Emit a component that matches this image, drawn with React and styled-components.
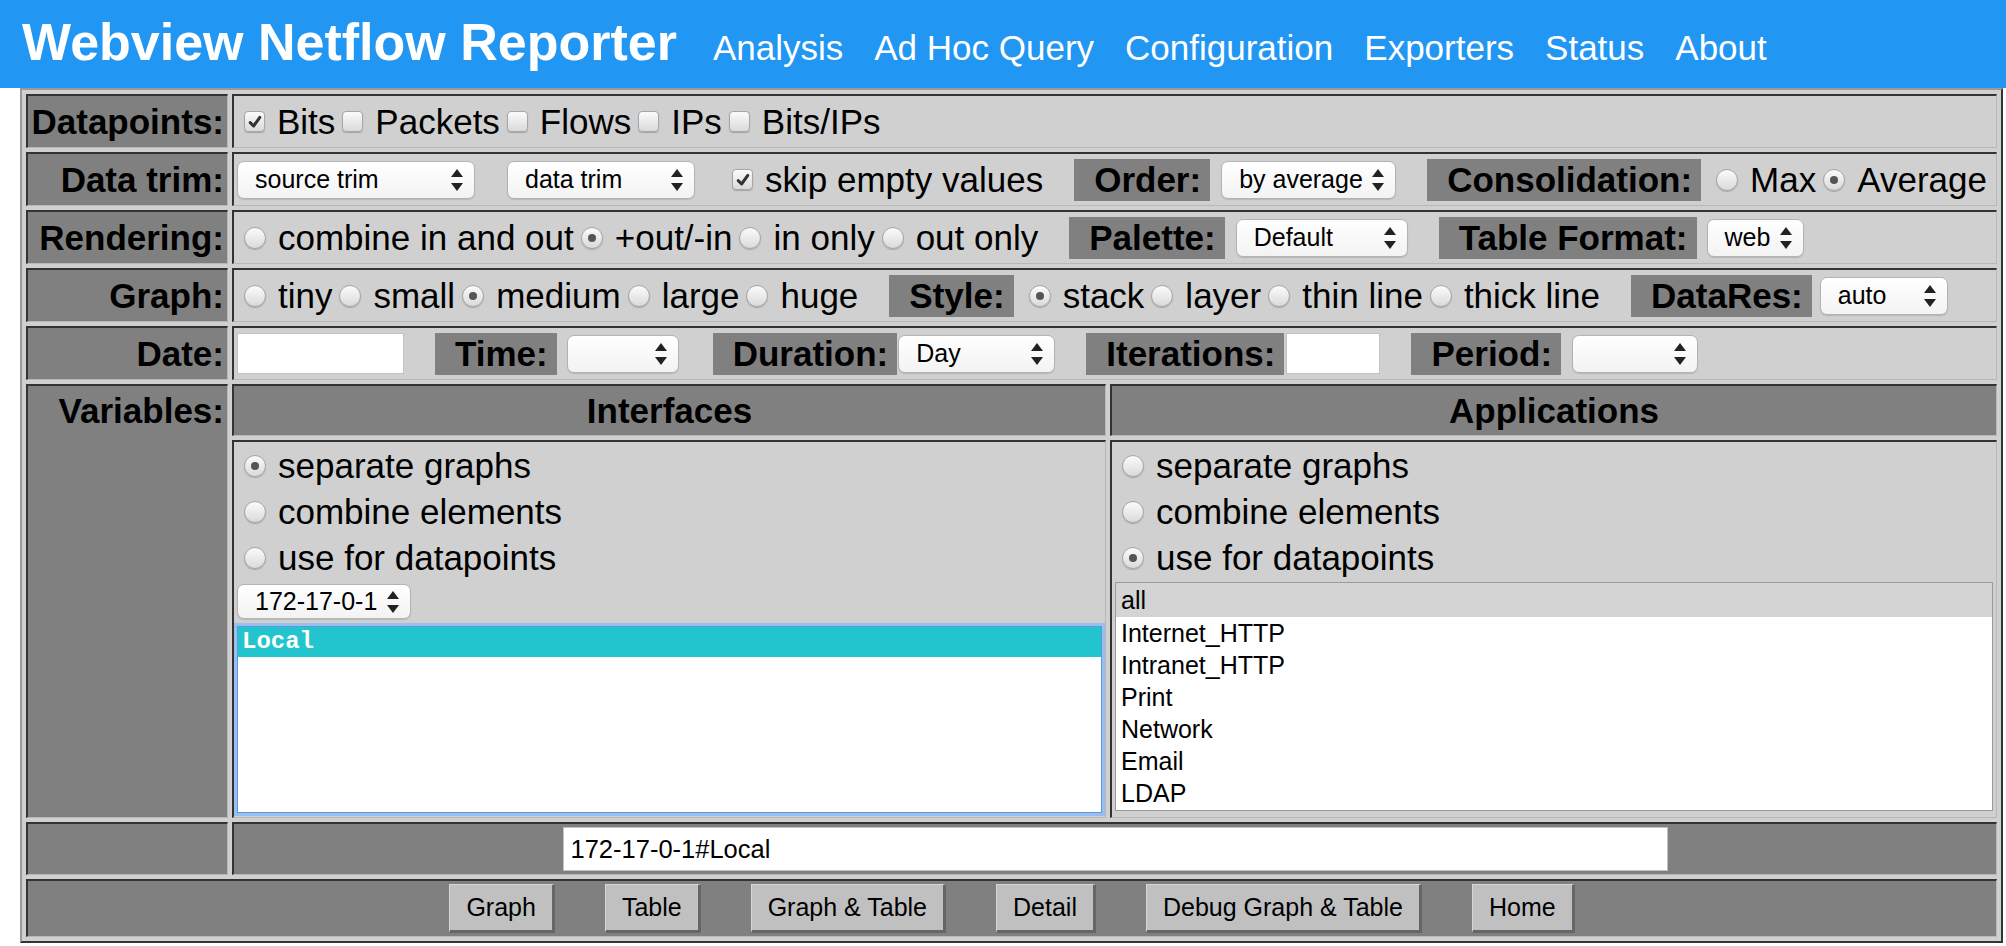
import React from 'react'
import styled, { createGlobalStyle } from 'styled-components'

const GlobalStyle = createGlobalStyle`
  body {
    margin: 0;
    background: #fff;
    color: #000;
    font-family: "Liberation Sans", Arial, Helvetica, sans-serif;
  }
`

const Header = styled.header`
  display: flex;
  align-items: baseline;
  gap: 31px;
  height: 88px;
  box-sizing: border-box;
  padding: 16px 0 0 22px;
  background: #2196f3;
  color: #fff;
`

const Title = styled.h1`
  margin: 0 5px 0 0;
  font-size: 52px;
  font-weight: bold;
  line-height: 1;
  white-space: nowrap;
`

const NavLink = styled.a`
  font-size: 35px;
  line-height: 1;
  color: #fff;
  text-decoration: none;
  white-space: nowrap;
`

const Table = styled.div`
  display: grid;
  grid-template-columns: 202px 874px 887px;
  grid-template-rows: 54px 54px 54px 54px 54px 52px 378px 53px 58px;
  gap: 4px;
  padding: 4px;
  width: max-content;
  margin-left: 20px;
  border: 2px solid;
  border-color: #9a9a9a #333 #333 #9a9a9a;
  background: #d0d0d0;
`

const Cell = styled.div`
  box-sizing: border-box;
  border-style: solid;
  border-width: 2px 1px 1px 2px;
  border-color: #333 #b8b8b8 #b8b8b8 #333;
  min-width: 0;
`

const Label = styled(Cell)`
  grid-row: ${p => (p.$rows ? `span ${p.$rows}` : 'auto')};
  display: flex;
  justify-content: flex-end;
  align-items: ${p => (p.$top ? 'flex-start' : 'center')};
  padding: 0 3px;
  background: #808080;
  font-size: 35px;
  font-weight: bold;
  line-height: 50px;
  white-space: nowrap;
`

const Content = styled(Cell)`
  grid-column: span ${p => p.$span || 2};
  display: flex;
  align-items: center;
  justify-content: ${p => (p.$center ? 'center' : 'flex-start')};
  gap: ${p => p.$gap || 0}px;
  padding: 0 3px;
  background: ${p => (p.$dark ? '#808080' : '#d0d0d0')};
  font-size: 35px;
  white-space: nowrap;
`

const HeadCell = styled(Cell)`
  display: flex;
  align-items: center;
  justify-content: center;
  background: #808080;
  font-size: 35px;
  font-weight: bold;
`

const Panel = styled(Cell)`
  display: flex;
  flex-direction: column;
  padding: 1px 3px 0;
  background: #d0d0d0;
  font-size: 35px;
  white-space: nowrap;
`

const Opt = styled.label`
  display: inline-flex;
  align-items: center;
  flex-shrink: 0;
  height: ${p => (p.$line ? '46px' : 'auto')};
  margin-left: ${p => p.$ml || 0}px;
`

const RadioDot = styled.span`
  display: inline-flex;
  align-items: center;
  justify-content: center;
  flex-shrink: 0;
  width: 22px;
  height: 22px;
  box-sizing: border-box;
  margin: 0 12px 0 7px;
  border: 1px solid #a6a6a6;
  border-radius: 50%;
  background: linear-gradient(#fbfbfb, #dadada);
  box-shadow: 0 1px 1px rgba(0, 0, 0, 0.2);

  &::after {
    content: '';
    display: ${p => (p.$on ? 'block' : 'none')};
    width: 8px;
    height: 8px;
    border-radius: 50%;
    background: #555;
  }
`

const CheckBox = styled.span`
  display: inline-flex;
  align-items: center;
  justify-content: center;
  flex-shrink: 0;
  width: 21px;
  height: 21px;
  box-sizing: border-box;
  margin: 0 12px 0 7px;
  border: 1px solid #a6a6a6;
  border-radius: 4px;
  background: linear-gradient(#fbfbfb, #dadada);
  box-shadow: 0 1px 1px rgba(0, 0, 0, 0.2);
`

const Tag = styled.span`
  display: inline-flex;
  align-items: center;
  flex-shrink: 0;
  height: 42px;
  box-sizing: border-box;
  padding: 0 9px 0 20px;
  margin-left: ${p => p.$ml ?? 31}px;
  margin-right: ${p => p.$mr ?? 11}px;
  background: #808080;
  font-size: 35px;
  font-weight: bold;
`

const SelectBox = styled.div`
  display: inline-flex;
  align-items: center;
  justify-content: space-between;
  flex-shrink: 0;
  align-self: ${p => (p.$start ? 'flex-start' : 'auto')};
  box-sizing: border-box;
  width: ${p => p.$w}px;
  height: ${p => p.$h || 38}px;
  padding: 0 11px 0 17px;
  margin-left: ${p => p.$ml || 0}px;
  margin-top: ${p => p.$mt || 0}px;
  border: 1px solid #b3b3b3;
  border-radius: 7px;
  background: linear-gradient(#ffffff, #f3f3f3);
  box-shadow: 0 1px 1px rgba(0, 0, 0, 0.12);
  font-size: 25px;
`

const TextField = styled.input`
  flex-shrink: 0;
  box-sizing: border-box;
  width: ${p => p.$w}px;
  height: ${p => p.$h || 41}px;
  padding: 0 7px;
  border: 1px solid #c2c2c2;
  background: #fff;
  font-family: inherit;
  font-size: 25.5px;
  color: #000;
  outline: none;
`

const ListBox = styled.div`
  box-sizing: border-box;
  height: ${p => p.$h}px;
  margin-top: ${p => p.$mt || 0}px;
  border: 1px solid ${p => (p.$focus ? '#5f97dd' : '#9a9a9a')};
  box-shadow: ${p => (p.$focus ? '0 0 0 3px #98c0ef' : 'none')};
  background: #fff;
  overflow: hidden;
`

const Option = styled.div`
  height: ${p => p.$h || 32}px;
  line-height: ${p => p.$h || 32}px;
  padding-left: 5px;
  background: ${p => (p.$sel ? '#d4d4d4' : 'transparent')};
  font-size: 25px;
`

const MonoOption = styled.div`
  height: 30px;
  line-height: 30px;
  padding-left: 4px;
  background: #22c5cd;
  color: #fff;
  font-family: "Liberation Mono", "Courier New", monospace;
  font-size: 24px;
  font-weight: bold;
`

const Button = styled.button`
  height: 49px;
  padding: 0 16px;
  border-style: solid;
  border-width: 1px 3px 3px 1px;
  border-color: #d6d6d6 #666 #666 #d6d6d6;
  background: #c0c0c0;
  color: #000;
  font-family: inherit;
  font-size: 25px;
  cursor: pointer;
`

const Arrows = () => (
  <svg width="12" height="22" viewBox="0 0 12 22">
    <polygon points="6,0 12,8 0,8" fill="#222" />
    <polygon points="0,14 12,14 6,22" fill="#222" />
  </svg>
)

const CheckMark = () => (
  <svg width="14" height="14" viewBox="0 0 14 14">
    <path d="M2.2 7.6 L5.6 11 L11.8 2.4" fill="none" stroke="#333" strokeWidth="3" strokeLinecap="round" strokeLinejoin="round" />
  </svg>
)

const Select = ({ value, ...rest }) => (
  <SelectBox {...rest}>
    <span>{value}</span>
    <Arrows />
  </SelectBox>
)

const Choice = ({ check, on, ml, line, children }) => (
  <Opt $ml={ml} $line={line}>
    {check ? <CheckBox>{on && <CheckMark />}</CheckBox> : <RadioDot $on={on} />}
    {children}
  </Opt>
)

const apps = ['Internet_HTTP', 'Intranet_HTTP', 'Print', 'Network', 'Email', 'LDAP']
const buttons = ['Graph', 'Table', 'Graph & Table', 'Detail', 'Debug Graph & Table', 'Home']

export default function App() {
  return (
    <>
      <GlobalStyle />
      <Header>
        <Title>Webview Netflow Reporter</Title>
        <NavLink href="#">Analysis</NavLink>
        <NavLink href="#">Ad Hoc Query</NavLink>
        <NavLink href="#">Configuration</NavLink>
        <NavLink href="#">Exporters</NavLink>
        <NavLink href="#">Status</NavLink>
        <NavLink href="#">About</NavLink>
      </Header>

      <Table>
        <Label>Datapoints:</Label>
        <Content>
          <Choice check on>Bits</Choice>
          <Choice check>Packets</Choice>
          <Choice check>Flows</Choice>
          <Choice check>IPs</Choice>
          <Choice check>Bits/IPs</Choice>
        </Content>

        <Label>Data trim:</Label>
        <Content>
          <Select $w={238} value="source trim" />
          <Select $w={188} $ml={32} value="data trim" />
          <Choice check on ml={30}>skip empty values</Choice>
          <Tag>Order:</Tag>
          <Select $w={175} value="by average" />
          <Tag $mr={8}>Consolidation:</Tag>
          <Choice>Max</Choice>
          <Choice on>Average</Choice>
        </Content>

        <Label>Rendering:</Label>
        <Content>
          <Choice>combine in and out</Choice>
          <Choice on>+out/-in</Choice>
          <Choice>in only</Choice>
          <Choice>out only</Choice>
          <Tag>Palette:</Tag>
          <Select $w={172} value="Default" />
          <Tag $mr={10}>Table Format:</Tag>
          <Select $w={97} value="web" />
        </Content>

        <Label>Graph:</Label>
        <Content>
          <Choice>tiny</Choice>
          <Choice>small</Choice>
          <Choice on>medium</Choice>
          <Choice>large</Choice>
          <Choice>huge</Choice>
          <Tag $mr={8}>Style:</Tag>
          <Choice on>stack</Choice>
          <Choice>layer</Choice>
          <Choice>thin line</Choice>
          <Choice>thick line</Choice>
          <Tag $mr={8}>DataRes:</Tag>
          <Select $w={128} value="auto" />
        </Content>

        <Label>Date:</Label>
        <Content>
          <TextField $w={167} readOnly defaultValue="" />
          <Tag $mr={10}>Time:</Tag>
          <Select $w={112} value="" />
          <Tag $ml={34} $mr={1}>Duration:</Tag>
          <Select $w={157} value="Day" />
          <Tag $ml={31} $mr={2}>Iterations:</Tag>
          <TextField $w={94} readOnly defaultValue="" />
          <Tag>Period:</Tag>
          <Select $w={126} value="" />
        </Content>

        <Label $rows={2} $top>Variables:</Label>
        <HeadCell>Interfaces</HeadCell>
        <HeadCell>Applications</HeadCell>
        <Panel>
          <Choice line on>separate graphs</Choice>
          <Choice line>combine elements</Choice>
          <Choice line>use for datapoints</Choice>
          <Select $start $w={174} $h={35} $mt={3} value="172-17-0-1" />
          <ListBox $focus $h={187} $mt={7}>
            <MonoOption>Local</MonoOption>
          </ListBox>
        </Panel>
        <Panel>
          <Choice line>separate graphs</Choice>
          <Choice line>combine elements</Choice>
          <Choice line on>use for datapoints</Choice>
          <ListBox $h={229} $mt={1}>
            <Option $sel $h={34}>all</Option>
            {apps.map(a => (
              <Option key={a}>{a}</Option>
            ))}
          </ListBox>
        </Panel>

        <Label />
        <Content $dark $center>
          <TextField $w={1105} $h={44} readOnly defaultValue="172-17-0-1#Local" />
        </Content>

        <Content $span={3} $dark $center $gap={50}>
          {buttons.map(b => (
            <Button key={b}>{b}</Button>
          ))}
        </Content>
      </Table>
    </>
  )
}
